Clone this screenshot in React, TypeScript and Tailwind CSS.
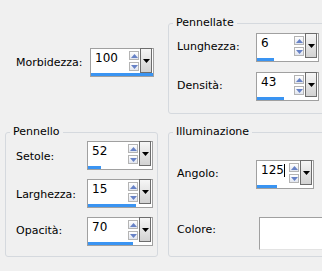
import React from "react";

type SpinProps = {
  className: string;
  value: string;
  bar: number;
  caret?: boolean;
};

const Up = () => (
  <svg width="7" height="4" viewBox="0 0 7 4">
    <polygon points="0,4 3.5,0 7,4" fill="#6782c6" />
  </svg>
);

const Down = () => (
  <svg width="7" height="4" viewBox="0 0 7 4">
    <polygon points="0,0 7,0 3.5,4" fill="#6782c6" />
  </svg>
);

const Spin = ({ className, value, bar, caret }: SpinProps) => {
  return (
    <div className={`flex flex-col shrink-0 h-[29px] border border-[#a0a0a0] bg-white ${className}`}>
      <div className="flex h-[24px]">
        <div className="flex-1 pl-[4px] pt-[3px] text-[12px] leading-[13px] text-black flex items-start">
          <span>{value}</span>
          {caret && <span className="inline-block w-px h-[13px] bg-black" />}
        </div>
        {/* freccette su/giù */}
        <div className="flex flex-col gap-[2px] pt-[2px] w-[10px]">
          <div className="h-[9px] border border-[#b4b4b4] bg-gradient-to-b from-white to-[#e2e6ef] flex items-center justify-center">
            <Up />
          </div>
          <div className="h-[9px] border border-[#b4b4b4] bg-gradient-to-b from-white to-[#e2e6ef] flex items-center justify-center">
            <Down />
          </div>
        </div>
        <div className="ml-[1px] mr-[1px] -mt-[1px] w-[12px] h-[25px] border border-[#6d6d6d] bg-gradient-to-b from-[#f6f6f6] to-[#d2d2d2] flex items-center justify-center">
          <svg width="7" height="4" viewBox="0 0 7 4">
            <polygon points="0,0 7,0 3.5,4" fill="#000" />
          </svg>
        </div>
      </div>
      <div className="h-[3px]">
        <div className="h-full bg-[#3a94f2]" style={{ width: bar }} />
      </div>
    </div>
  );
};

const App = () => {
  return (
    <div className="w-[322px] h-[271px] overflow-hidden bg-[#f0f0f0] font-['DejaVu_Sans',sans-serif] text-[11px] text-black flex">
      {/* colonna sinistra */}
      <div className="w-[161px] shrink-0">
        <div className="mt-[48px] h-[29px] flex items-center">
          <div className="w-[90px] pl-[16px] pt-[2px]">Morbidezza:</div>
          <Spin className="w-[64px]" value="100" bar={62} />
        </div>

        <fieldset className="mt-[48px] ml-[5px] w-[153px] h-[132px] border border-[#d5d9de] rounded-[3px] p-0 pt-[2px]">
          <legend className="ml-[4px] px-[3px] leading-[14px]">Pennello</legend>
          <div className="flex flex-col gap-[9px]">
            <div className="h-[29px] flex items-center">
              <div className="w-[81px] pl-[10px] pt-[3px]">Setole:</div>
              <Spin className="w-[66px]" value="52" bar={13} />
            </div>
            <div className="h-[29px] flex items-center">
              <div className="w-[81px] pl-[10px] pt-[3px]">Larghezza:</div>
              <Spin className="w-[66px]" value="15" bar={48} />
            </div>
            <div className="h-[29px] flex items-center">
              <div className="w-[81px] pl-[10px]">Opacità:</div>
              <Spin className="w-[66px]" value="70" bar={45} />
            </div>
          </div>
        </fieldset>
      </div>

      {/* colonna destra */}
      <div className="ml-[7px] shrink-0">
        <fieldset className="mt-[16px] w-[170px] h-[98px] border border-[#d5d9de] rounded-[3px] p-0 pt-[3px]">
          <legend className="ml-[4px] px-[3px] leading-[14px]">Pennellate</legend>
          <div className="flex flex-col gap-[10px]">
            <div className="h-[29px] flex items-center">
              <div className="w-[87px] pl-[8px]">Lunghezza:</div>
              <Spin className="w-[63px]" value="6" bar={17} />
            </div>
            <div className="h-[29px] flex items-center">
              <div className="w-[87px] pl-[8px]">Densità:</div>
              <Spin className="w-[63px]" value="43" bar={27} />
            </div>
          </div>
        </fieldset>

        <fieldset className="mt-[11px] w-[170px] h-[132px] border border-[#d5d9de] rounded-[3px] p-0 pt-[21px]">
          <legend className="ml-[4px] px-[3px] leading-[14px]">Illuminazione</legend>
          <div className="h-[29px] flex items-center">
            <div className="w-[87px] pl-[8px]">Angolo:</div>
            <Spin className="w-[58px]" value="125" bar={20} caret />
          </div>
          <div className="mt-[28px] h-[33px] flex items-center">
            <div className="w-[90px] pl-[8px] pb-[6px]">Colore:</div>
            <div className="w-[80px] h-[33px] bg-white border border-[#a0a0a0] border-b-[#e3e3e3]" />
          </div>
        </fieldset>
      </div>
    </div>
  );
};

export default App;
